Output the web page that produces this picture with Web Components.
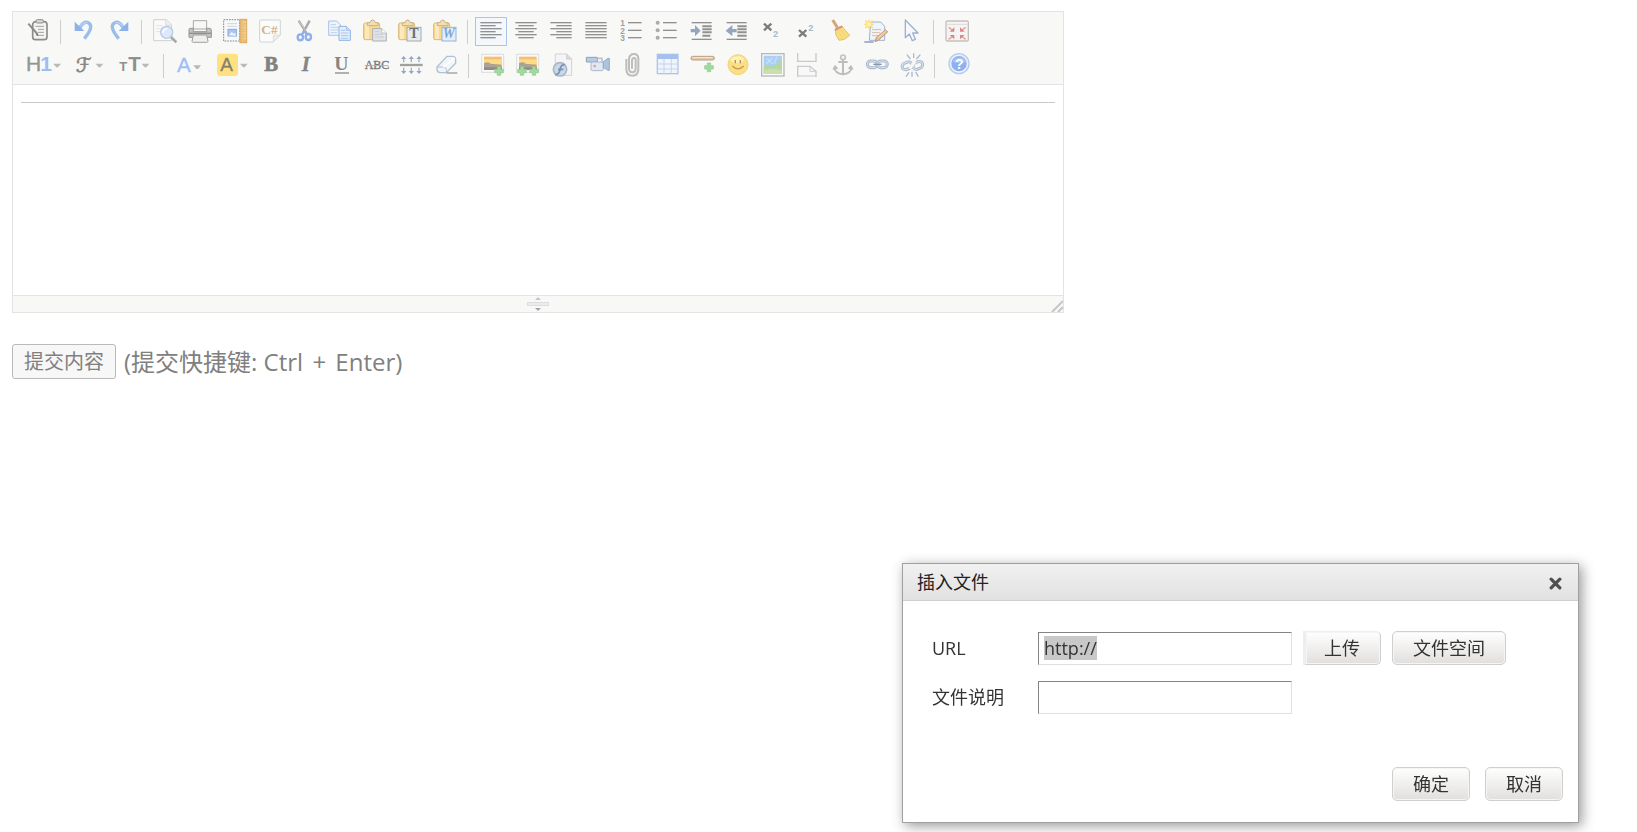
<!DOCTYPE html>
<html lang="zh-CN">
<head>
<meta charset="utf-8">
<title>KindEditor</title>
<style>
  body {
    margin: 11px 12px;
    background: #fff;
    color: #333;
    font: 18px/24px "Open Sans", "Noto Sans CJK SC", sans-serif;
  }
</style>
</head>
<body>
<demo-page></demo-page>

<script>
/* Toolbar glyphs, drawn on a grid of three units to the pixel. */
const lines = rows => rows.map(([x1, x2, y]) =>
  `<path d="M${x1} ${y}H${x2}" stroke="#919191" stroke-width="4"/>`).join('');
const caret = (x, y) => `<path d="M${x} ${y}h23l-9 11h-5z" fill="#b9b9b6"/>`;
const plus = (x, y) => `<path d="M${x - 5} ${y - 13}h10v8h8v10h-8v8h-10v-8h-8v-10h8z" fill="#a3d9a0" stroke="#8ccb8b" stroke-width="2"/>`;
const clip = `<rect x="2" y="12" width="48" height="50" rx="5" fill="#fbd98a" stroke="#d8b87c" stroke-width="3"/>
  <rect x="6" y="14" width="12" height="46" fill="#fbe9bd"/>
  <path d="M13 20V11h8q2-8 8-8t8 8h8v9z" fill="#f0dfb5" stroke="#c9b080" stroke-width="3"/>`;
const photo = `<rect x="5" y="4" width="66" height="54" fill="#fafafa" stroke="#dcdcda" stroke-width="3"/>
  <rect x="12" y="11" width="53" height="40" fill="#f6bd74"/><rect x="12" y="19" width="53" height="14" fill="#fddc86"/>
  <path d="M12 30q12-5 20 2l33 4v15H12z" fill="#aaa294"/><path d="M12 43h53v8H12z" fill="#8f8c86"/>`;
const ring = (x, y) => `<rect x="${x}" y="${y}" width="30" height="20" rx="10" fill="none" stroke="#a9b8cc" stroke-width="9"/>
  <rect x="${x}" y="${y}" width="30" height="20" rx="10" fill="none" stroke="#dce5f0" stroke-width="3"/>`;

const GLYPHS = {
  source: `<rect x="20" y="8" width="43" height="54" rx="9" fill="#f4f4f2" stroke="#8c8c8c" stroke-width="5"/>
    <rect x="30" y="2" width="22" height="10" rx="4" fill="#d8d8d6" stroke="#8c8c8c" stroke-width="3"/>
    <path d="M28 22h26M36 31h18M36 40h18M30 49h24" stroke="#a3a3a3" stroke-width="3"/>
    <path d="M7 14l27 31" stroke="#8c8c8c" stroke-width="6"/><path d="M30 47l8 4-3-9z" fill="#777"/>`,
  undo: `<path d="M24 25Q34 8 46 10Q70 19 37 59" fill="none" stroke="#9bbdeb" stroke-width="10"/><path d="M8 8v28h29z" fill="#8db2ea"/>
    <path d="M24 21Q36 8 46 11" fill="none" stroke="#c9ddf7" stroke-width="3"/>`,
  redo: `<path d="M48 25Q38 8 26 10Q2 19 35 59" fill="none" stroke="#9bbdeb" stroke-width="10"/><path d="M64 8v28H35z" fill="#8db2ea"/>
    <path d="M48 21Q36 8 26 11" fill="none" stroke="#c9ddf7" stroke-width="3"/>`,
  preview: `<path d="M2 2h38l15 15v48H2z" fill="#fafafa" stroke="#d0d0d0" stroke-width="3"/><path d="M38 2v17h17" fill="#eee" stroke="#d0d0d0" stroke-width="2"/>
    <path d="M9 20h20M9 29h14M9 38h12" stroke="#e0e3e8" stroke-width="3"/>
    <path d="M54 54l16 16" stroke="#a9a9a9" stroke-width="8"/><circle cx="41" cy="40" r="18" fill="#dde9f8" stroke="#b7cbe6" stroke-width="4"/><path d="M29 42q3-13 14-14" fill="none" stroke="#fff" stroke-width="4"/>`,
  print: `<path d="M16 5h40v25H16z" fill="#f7f7f7" stroke="#a9a9a9" stroke-width="3"/><path d="M3 31q0-3 5-3h8v10h40V28h8q6 0 6 6v21H3z" fill="#c3c3c1" stroke="#959595" stroke-width="3"/>
    <path d="M3 43h67" stroke="#8f8f8f" stroke-width="4"/><path d="M16 48h40l4 19q0 3-4 3H16q-4 0-4-3z" fill="#efefed" stroke="#a0a0a0" stroke-width="3"/>`,
  template: `<rect x="2" y="2" width="48" height="64" fill="#f6f8fa" stroke="#888" stroke-width="3" stroke-dasharray="5 3"/>
    <path d="M13 14h29M13 22h29" stroke="#ccd5df" stroke-width="3"/><rect x="15" y="31" width="25" height="20" fill="#a8c8f0" stroke="#86a9dc" stroke-width="3"/><path d="M17 49l9-10 6 5 6-3v9z" fill="#eef6fc"/>
    <rect x="51" y="1" width="20" height="70" fill="#e9c07b" stroke="#d9a659" stroke-width="3"/><path d="M60 10h10M63 18h7M60 26h10M63 34h7M60 42h10M63 50h7M60 58h10" stroke="#f3d79d" stroke-width="3"/>`,
  code: `<path d="M8 3h56q3 0 3 3v42L45 69H8q-3 0-3-3V6q0-3 3-3z" fill="#fbfbfb" stroke="#d3d3d3" stroke-width="3"/><path d="M67 48H51q-5 0-5 5v15z" fill="#eee" stroke="#d3d3d3" stroke-width="2"/>
    <text x="10" y="46" font-family="Liberation Serif" font-weight="bold" font-size="40" fill="#d3b58b">C#</text>`,
  cut: `<path d="M17 5l24 38M50 5L29 43" stroke="#a8a8a8" stroke-width="7"/><path d="M17 5l22 32" stroke="#dcdcdc" stroke-width="2"/>
    <ellipse cx="22" cy="55" rx="8" ry="9" fill="none" stroke="#8fb0e8" stroke-width="7"/><ellipse cx="46" cy="54" rx="8" ry="9" fill="none" stroke="#8fb0e8" stroke-width="7"/><path d="M26 46l8-8 8 8" fill="none" stroke="#8fb0e8" stroke-width="6"/>`,
  copy: `<path d="M2 6h24l12 12v31H2z" fill="#edf4fc" stroke="#aac3e6" stroke-width="3"/><path d="M8 17h16M8 25h24M8 33h24M8 41h20" stroke="#bcd1ee" stroke-width="3"/>
    <path d="M33 22h22l12 12v30H33z" fill="#e3eefb" stroke="#8fb1e5" stroke-width="3"/><path d="M55 22v12h12" fill="#c7dbf5" stroke="#8fb1e5" stroke-width="2"/><path d="M39 34h12M39 42h22M39 50h22M39 58h20" stroke="#a9c5ec" stroke-width="3"/>`,
  paste: `${clip}<path d="M29 29h27l14 13v24H29z" fill="#e2e4e8" stroke="#a9afb8" stroke-width="3"/><path d="M56 29v13h14" fill="#fff" stroke="#a9afb8" stroke-width="2"/><path d="M35 38h15M35 46h24M35 54h28" stroke="#c6cad1" stroke-width="3"/>`,
  plainpaste: `${clip}<rect x="27" y="25" width="42" height="41" fill="#e6ebf0" stroke="#a4a9b0" stroke-width="3"/>
    <text x="34" y="58" font-family="Liberation Serif" font-weight="bold" font-size="42" fill="#6f6f6f">T</text>`,
  wordpaste: `${clip}<rect x="27" y="25" width="42" height="41" fill="#e2effb" stroke="#92b3dc" stroke-width="3"/>
    <text x="29" y="58" font-family="Liberation Serif" font-weight="bold" font-style="italic" font-size="41" fill="#7fa4d5">W</text>`,
  left: lines([[4, 68, 11], [4, 50, 20], [4, 68, 29], [4, 50, 38], [4, 68, 47], [4, 50, 56]]),
  center: lines([[4, 68, 11], [13, 59, 20], [4, 68, 29], [13, 59, 38], [4, 68, 47], [13, 59, 56]]),
  right: lines([[4, 68, 11], [22, 68, 20], [4, 68, 29], [22, 68, 38], [4, 68, 47], [22, 68, 56]]),
  full: lines([[4, 68, 11], [4, 68, 20], [4, 68, 29], [4, 68, 38], [4, 68, 47], [4, 68, 56]]),
  ol: `${lines([[27, 68, 11], [27, 68, 34], [27, 68, 56]])}<g font-family="Liberation Sans" font-weight="bold" font-size="25" fill="#a0a0a0"><text x="4" y="21">1</text><text x="4" y="44">2</text><text x="4" y="67">3</text></g>`,
  ul: `${lines([[27, 68, 11], [27, 68, 34], [27, 68, 56]])}<g fill="#aaa"><circle cx="11" cy="11" r="6"/><circle cx="11" cy="34" r="6"/><circle cx="11" cy="56" r="6"/></g>`,
  indent: `${lines([[8, 68, 11], [8, 68, 61]])}<path d="M40 22h28M40 31h28M40 40h28M40 50h24" stroke="#919191" stroke-width="6"/><path d="M5 30h13V18l17 17-17 17V40H5z" fill="#94a5c0"/>`,
  outdent: `${lines([[8, 68, 11], [8, 68, 61]])}<path d="M40 22h28M40 31h28M40 40h28M40 50h28" stroke="#919191" stroke-width="6"/><path d="M38 30H25V18L5 35l20 17V40h13z" fill="#94a5c0"/>`,
  sub: `<path d="M15 14l22 20M37 14L15 34" stroke="#7c7c7c" stroke-width="7"/><text x="42" y="53" font-family="Liberation Sans" font-size="28" font-weight="bold" fill="#a8b8d0">2</text>`,
  sup: `<path d="M15 33l22 20M37 33L15 53" stroke="#7c7c7c" stroke-width="7"/><text x="43" y="35" font-family="Liberation Sans" font-size="28" font-weight="bold" fill="#a8b8d0">2</text>`,
  clean: `<path d="M11 3l17 27" stroke="#d5a679" stroke-width="9"/><path d="M18 31l20-10 24 28q-14 16-32 15-12-15-12-33z" fill="#f9dc7e" stroke="#e7c368" stroke-width="3"/><path d="M18 33l22-11" stroke="#dc938a" stroke-width="6"/><path d="M28 38l14 23M36 33l16 22" stroke="#eed07a" stroke-width="2"/>`,
  quick: `<path d="M20 9h30l12 13v42H16z" fill="#f0f5fb" stroke="#9eb2d0" stroke-width="3"/><path d="M24 32h28M24 41h24M24 50h18" stroke="#e0b89c" stroke-width="3"/>
    <path d="M33 68l4-13 28-23 6 7-28 25z" fill="#eebc94" stroke="#b99a86" stroke-width="3"/><path d="M41 57l26-22" stroke="#fad9ad" stroke-width="3"/><path d="M1 69h28" stroke="#7f93b2" stroke-width="4"/>
    <path d="M15 2v28M1 16h28M4 5l22 22M26 5L4 27" stroke="#fbdc78" stroke-width="5"/><circle cx="15" cy="16" r="6" fill="#fff3bd"/>`,
  select: `<path d="M19 3v53l12-11 9 20 9-4-8-19h16z" fill="#f5f8fc" stroke="#9fb1ce" stroke-width="4" stroke-linejoin="round"/>`,
  fullscreen: `<rect x="3" y="6" width="67" height="60" rx="4" fill="#f5f4f3" stroke="#c6bfbd" stroke-width="4"/><path d="M4 16h65" stroke="#dedad8" stroke-width="3"/>
    <g stroke="#e2aaa5" stroke-width="5"><path d="M11 25l12 9M62 25l-12 9M11 61l12-9M62 61l-12-9"/></g><g fill="#d98884"><path d="M28 25v13H14zM45 25v13h14zM28 61V48H14zM45 61V48h14z"/></g>`,
  heading: `<g font-family="Liberation Sans" font-size="63"><text x="0" y="55" fill="#949494" stroke="#949494">H</text><text x="43" y="55" font-weight="bold" fill="#9fbdf5">1</text></g>${caret(82, 32)}`,
  fontname: `<text x="11" y="56" font-family="DejaVu Sans, DejaVu Serif" font-size="60" fill="#888" stroke="#888" stroke-width="2">ℱ</text>${caret(71, 32)}`,
  fontsize: `<g font-family="Liberation Sans" font-weight="bold" fill="#8f8f8f"><text x="4" y="55" font-size="39">T</text><text x="31" y="55" font-size="62">T</text></g>${caret(71, 32)}`,
  forecolor: `<text x="6" y="57" font-family="Liberation Sans" font-size="62" fill="#9fbef6" stroke="#9fbef6">A</text>${caret(55, 37)}`,
  hilite: `<rect x="0" y="2" width="63" height="67" rx="9" fill="#ffe27f"/><text x="10" y="54" font-family="Liberation Sans" font-size="57" fill="#857f6c" stroke="#857f6c">A</text>${caret(69, 32)}`,
  bold: `<text x="16" y="54" font-family="Liberation Serif" font-weight="bold" font-size="62" fill="#828282" stroke="#828282" stroke-width="2">B</text>`,
  italic: `<text x="23" y="54" font-family="Liberation Serif" font-weight="bold" font-style="italic" font-size="62" fill="#858585" stroke="#858585">I</text>`,
  underline: `<text x="16" y="51" font-family="Liberation Serif" font-weight="bold" font-size="59" fill="#868686">U</text><path d="M18 60h42" stroke="#8c8c8c" stroke-width="4"/>`,
  strike: `<text x="2" y="48" font-family="Liberation Serif" font-size="36" fill="#777" stroke="#777" stroke-width="1">ABC</text><path d="M2 38h72" stroke="#a4b3cb" stroke-width="3"/>`,
  lineheight: `<path d="M3 36h68" stroke="#a0a0a0" stroke-width="7"/><path d="M14 12v16M37 12v16M60 12v16M14 44v16M37 44v16M60 44v16" stroke="#a1b1ca" stroke-width="4"/>
    <g fill="#94a6c3"><path d="M6 18l8-9 8 9zM29 18l8-9 8 9zM52 18l8-9 8 9zM6 54l8 9 8-9zM29 54l8 9 8-9zM52 54l8 9 8-9z"/></g>`,
  erase: `<path d="M9 42L39 10h17q8 0 9 9v12L37 59H19q-9 0-10-9z" fill="#f1f5fa" stroke="#b2c0d6" stroke-width="4"/><path d="M9 42h19q8 0 9 8v9" fill="none" stroke="#b2c0d6" stroke-width="3"/><path d="M28 42L62 15" stroke="#fff" stroke-width="5"/><path d="M38 60h32" stroke="#9c9c9c" stroke-width="4"/>`,
  image: photo + plus(57, 54),
  images: photo + plus(21, 54) + plus(57, 54),
  flash: `<path d="M16 3h34l15 15v49H16z" fill="#f5f5f5" stroke="#d2d2d2" stroke-width="3"/><path d="M50 3v15h15" fill="#ddd" stroke="#ccc" stroke-width="3"/>
    <circle cx="30" cy="49" r="20" fill="#cbd8e8" stroke="#a8b8cf" stroke-width="5"/><path d="M44 35q-12 0-14 15t-14 15M24 49h16" fill="none" stroke="#7b91b0" stroke-width="5"/>`,
  media: `<path d="M4 13h33v14H4z" fill="#b9cce2" stroke="#8aa1c0" stroke-width="3"/><path d="M18 27h37v22q0 4-5 4H23q-5 0-5-4z" fill="#e0e8f1" stroke="#a8b8cd" stroke-width="3"/><path d="M55 26l14-10h4v36h-4l-14-9z" fill="#acc4e0" stroke="#94aac8" stroke-width="3"/><circle cx="29" cy="39" r="4" fill="#dd9b9b"/><path d="M37 16h14v12" fill="none" stroke="#bac5d1" stroke-width="5"/>`,
  file: `<path d="M19 18v30q0 20 18 20t18-20V17q0-14-13-14T27 17v29q0 12 10 12t10-12V22q0-7-5-7t-6 7v25" fill="none" stroke="#bdbdbd" stroke-width="6"/>`,
  table: `<rect x="7" y="4" width="62" height="58" fill="#f0f5fc" stroke="#afc5e8" stroke-width="4"/><path d="M7 4h62v14H7z" fill="#a3c0f0"/><path d="M27 18v44M49 18v44M8 33h60M8 48h60" stroke="#c4d4ec" stroke-width="3"/>`,
  rule: `<rect x="3" y="10" width="70" height="11" rx="5" fill="#e2c5a4" stroke="#b6a18c" stroke-width="3"/><path d="M8 14h59" stroke="#faebd4" stroke-width="3"/>${plus(57, 43)}`,
  emoticons: `<circle cx="39" cy="35" r="30" fill="#fbdf81" stroke="#f0d37f" stroke-width="3"/><ellipse cx="37" cy="20" rx="20" ry="10" fill="#fff0b6"/><path d="M31 21v10M46 21v10" stroke="#b0905c" stroke-width="4"/><path d="M22 39q17 17 34 0" fill="none" stroke="#bf9a5e" stroke-width="4"/>`,
  map: `<rect x="5" y="2" width="67" height="67" fill="#fafafa" stroke="#b6b9b7" stroke-width="4"/><rect x="11" y="8" width="55" height="55" fill="#abcff5"/><path d="M11 41q10-13 20 0 10-9 19-5 8-18 16-13v40H11z" fill="#b5d7a2"/><path d="M11 52q25-10 55 0v11H11z" fill="#cadfad"/><path d="M20 16l18 16M38 14L18 32M50 11l-7 21" stroke="#c5e0fa" stroke-width="4"/>`,
  pagebreak: `<path d="M8 0v25h55V0" fill="#f8f8f8" stroke="#cacaca" stroke-width="4"/><path d="M8 72V40h37l18 15v17" fill="#f8f8f8" stroke="#cacaca" stroke-width="4"/><path d="M45 40v15h18M8 69h55" fill="none" stroke="#cacaca" stroke-width="3"/>`,
  anchor: `<circle cx="39" cy="13" r="7" fill="none" stroke="#c2c2c2" stroke-width="5"/><path d="M39 20v43M25 27h28M13 42q2 20 26 22 24-2 26-22" fill="none" stroke="#bdbdbd" stroke-width="6"/><path d="M7 50l8-15 10 12zM71 50l-8-15-10 12z" fill="#bdbdbd"/>`,
  link: `${ring(7, 24)}${ring(37, 24)}<path d="M25 34h25" stroke="#8796ae" stroke-width="4"/>`,
  unlink: `<g transform="rotate(-22 22 38)">${ring(6, 28)}</g><g transform="rotate(-22 54 36)">${ring(38, 27)}</g><path d="M29 47L46 24" stroke="#f8f8f6" stroke-width="9"/><path d="M21 5l10 13M41 1v14M61 5L49 18M18 71l9-13M36 71V56M55 71l-8-14" stroke="#a9b8cd" stroke-width="4"/>`,
  about: `<circle cx="39" cy="32" r="30" fill="#eaf1fc" stroke="#b7cbeb" stroke-width="4"/><circle cx="39" cy="32" r="23" fill="#8fb0ee"/><path d="M20 27q7-17 31-12 7 5 9 12-18 6-40 0z" fill="#a9c5f5"/><text x="27" y="47" font-family="Liberation Sans" font-weight="bold" font-size="42" fill="#fff">?</text>`,
};

/* Each entry: glyph, label, icon width. A null is a separator. */
const TOOLS = [
  [['source', 'HTML代码'], null, ['undo', '后退'], ['redo', '前进'], null, ['preview', '预览'], ['print', '打印'],
   ['template', '插入模板'], ['code', '插入程序代码'], ['cut', '剪切'], ['copy', '复制'], ['paste', '粘贴'],
   ['plainpaste', '粘贴为无格式文本'], ['wordpaste', '从Word粘贴'], null, ['left', '左对齐'], ['center', '居中'],
   ['right', '右对齐'], ['full', '两端对齐'], ['ol', '编号'], ['ul', '项目符号'], ['indent', '增加缩进'],
   ['outdent', '减少缩进'], ['sub', '下标'], ['sup', '上标'], ['clean', '清理HTML代码'], ['quick', '一键排版'],
   ['select', '全选'], null, ['fullscreen', '全屏显示']],
  [['heading', '段落', 35], ['fontname', '字体', 35], ['fontsize', '文字大小', 35], null, ['forecolor', '文字颜色', 31],
   ['hilite', '文字背景', 31], ['bold', '粗体'], ['italic', '斜体'], ['underline', '下划线'], ['strike', '删除线'],
   ['lineheight', '行距'], ['erase', '删除格式'], null, ['image', '图片'], ['images', '批量图片上传'],
   ['flash', 'Flash'], ['media', '视音频'], ['file', '插入文件'], ['table', '表格'], ['rule', '插入横线'],
   ['emoticons', '插入表情'], ['map', '百度地图'], ['pagebreak', '插入分页符'], ['anchor', '锚点'],
   ['link', '超级链接'], ['unlink', '取消超级链接'], null, ['about', '关于']],
];

class ShadowElement extends HTMLElement {
  connectedCallback() {
    if (this.shadowRoot) return;
    this.attachShadow({ mode: 'open' }).innerHTML = this.render();
    this.ready?.();
  }
}

customElements.define('tool-button', class extends ShadowElement {
  render() {
    const width = Number(this.getAttribute('width') || 24);
    return `<style>
      :host { display: block; flex: none; }
      button { display: block; box-sizing: border-box; height: 29px; margin: 0; padding: 1px 3px 2px; border: 1px solid transparent; background: none; }
      :host([pressed]) button { border-color: #aac5e8; background: #f4f8fd; }
      svg { display: block; overflow: visible; }
    </style>
    <button type="button" aria-label="${this.getAttribute('label')}" aria-pressed="${this.hasAttribute('pressed')}">
      <svg width="${width}" height="24" viewBox="0 0 ${width * 3} 72" fill="none" aria-hidden="true">${GLYPHS[this.getAttribute('glyph')]}</svg>
    </button>`;
  }
});

customElements.define('tool-bar', class extends ShadowElement {
  render() {
    const rows = TOOLS.map(row => `<div class="row">${row.map(tool => tool
      ? `<tool-button glyph="${tool[0]}" label="${tool[1]}" width="${tool[2] || 24}"${tool[0] === 'left' ? ' pressed' : ''}></tool-button>`
      : '<i></i>').join('')}</div>`).join('');
    return `<style>
      :host { display: grid; gap: 5px; padding: 5px 9px 4px; background: #f8f8f6; border-bottom: 1px solid #e3e3e1; }
      .row { display: flex; flex-wrap: wrap; align-items: center; gap: 3px; }
      i { width: 1px; height: 24px; margin: 0 4px 0 3px; background: #cdcdcb; }
    </style>${rows}`;
  }
});

customElements.define('status-bar', class extends ShadowElement {
  render() {
    return `<style>
      :host { display: grid; grid-template-columns: 1fr auto 1fr; align-items: center; height: 16px; background: #f8f8f6; border-top: 1px solid #e3e3e1; }
      svg { display: block; }
      .corner { justify-self: end; align-self: end; }
    </style>
    <span></span>
    <svg width="22" height="14" viewBox="0 0 22 14" aria-hidden="true"><path d="M8 3l3-3 3 3z" fill="#c5c5c5"/><rect x="0" y="5" width="22" height="4" rx="1" fill="#dcdddf"/><rect x="1" y="6" width="20" height="2" fill="#ececee"/><path d="M8 11h6l-3 3z" fill="#a6a6a6"/></svg>
    <svg class="corner" width="12" height="12" viewBox="0 0 12 12" aria-hidden="true"><path d="M1 12L12 1M7 12l5-5" stroke="#c6c6c6" stroke-width="2"/></svg>`;
  }
});

customElements.define('rich-editor', class extends ShadowElement {
  render() {
    return `<style>
      :host { display: block; box-sizing: border-box; max-width: 1052px; border: 1px solid #e3e3e1; background: #fff; }
      .body { min-height: 210px; box-sizing: border-box; padding: 17px 8px 8px; outline: none; }
      hr { height: 1px; margin: 0; border: 0; background: #c9c9c9; }
    </style>
    <tool-bar></tool-bar>
    <div class="body" contenteditable="true" role="textbox" aria-label="内容"><hr></div>
    <status-bar></status-bar>`;
  }
});

customElements.define('submit-row', class extends ShadowElement {
  render() {
    return `<style>
      :host { display: flex; align-items: center; gap: 8px; margin-top: 31px; color: #808080; font-size: 24px; line-height: 34px; }
      button { height: 35px; margin: 0; padding: 0 11px; border: 1px solid #bababa; border-radius: 3px; background: #f7f7f7; color: inherit; font: 20px/33px "Open Sans", "Noto Sans CJK SC", sans-serif; white-space: nowrap; }
      b { margin: 0 3px; font-weight: inherit; }
    </style>
    <button type="submit">提交内容</button><span>(提交快捷键: Ctrl <b>+</b> Enter)</span>`;
  }
});

customElements.define('dialog-button', class extends ShadowElement {
  render() {
    return `<style>
      :host { display: block; flex: none; }
      button { display: block; height: 34px; margin: 0; padding: 0 20px; border: 1px solid #cfcfcf; border-radius: 5px; background: linear-gradient(#fff, #e1dfde); box-shadow: inset 0 0 0 1px #f5f5f5; color: #333; font: inherit; line-height: 32px; white-space: nowrap; }
      :host([joined]) button { border-left: 3px solid #eee; border-top-color: #eee; padding-left: 18px; border-radius: 0 5px 5px 0; }
    </style><button type="button"><slot></slot></button>`;
  }
});

customElements.define('form-field', class extends ShadowElement {
  render() {
    return `<style>
      :host { display: flex; align-items: center; gap: 11px; height: 34px; }
      label { width: 95px; flex: none; }
      input { box-sizing: border-box; flex: 0 1 254px; min-width: 0; height: 33px; margin: 0; padding: 1px 5px; border: 1px solid; border-color: #848484 #e0e0e0 #e0e0e0 #848484; border-radius: 0; outline: none; background: #fff; color: #333; font: inherit; }
      input::selection { background: #c8c8c8; color: #333; }
    </style>
    <label for="value">${this.getAttribute('label')}</label>
    <input id="value" type="text" value="${this.getAttribute('value') || ''}">
    <slot></slot>`;
  }
  ready() {
    if (!this.hasAttribute('selected')) return;
    const input = this.shadowRoot.querySelector('input');
    input.focus({ preventScroll: true });
    input.select();
  }
});

customElements.define('editor-dialog', class extends ShadowElement {
  render() {
    return `<style>
      :host { position: fixed; right: 58px; bottom: 9px; display: block; box-sizing: border-box; width: 677px; max-width: calc(100% - 24px); border: 1px solid #a0a0a0; background: #fff; box-shadow: 3px 3px 12px #999; color: #333; }
      header { display: flex; align-items: center; justify-content: space-between; height: 36px; padding: 0 13px 0 14px; background: linear-gradient(#f1f1f1, #e1e1e1); border-bottom: 1px solid #cfcfcf; }
      h2 { margin: 0; font: inherit; color: #222; }
      .close { display: block; margin: 0; padding: 5px 3px 2px; border: 0; background: none; }
      .close svg { display: block; }
      .fields { display: grid; gap: 15px; padding: 30px 29px 0; }
      footer { display: flex; justify-content: flex-end; gap: 15px; padding: 53px 15px 21px; }
    </style>
    <header><h2>${this.getAttribute('heading')}</h2>
      <button class="close" type="button" aria-label="关闭"><svg width="13" height="13" viewBox="0 0 12 12"><path d="M2 2l8 8M10 2l-8 8" stroke="#505050" stroke-width="3" stroke-linecap="round"/></svg></button>
    </header>
    <div class="fields"><slot></slot></div>
    <footer><slot name="actions"></slot></footer>`;
  }
});

customElements.define('demo-page', class extends ShadowElement {
  render() {
    return `<style>:host { display: block; }</style>
    <rich-editor></rich-editor>
    <submit-row></submit-row>
    <editor-dialog role="dialog" heading="插入文件">
      <form-field label="URL" value="http://" selected><dialog-button joined>上传</dialog-button><dialog-button>文件空间</dialog-button></form-field>
      <form-field label="文件说明"></form-field>
      <dialog-button slot="actions">确定</dialog-button>
      <dialog-button slot="actions">取消</dialog-button>
    </editor-dialog>`;
  }
});
</script>
</body>
</html>
